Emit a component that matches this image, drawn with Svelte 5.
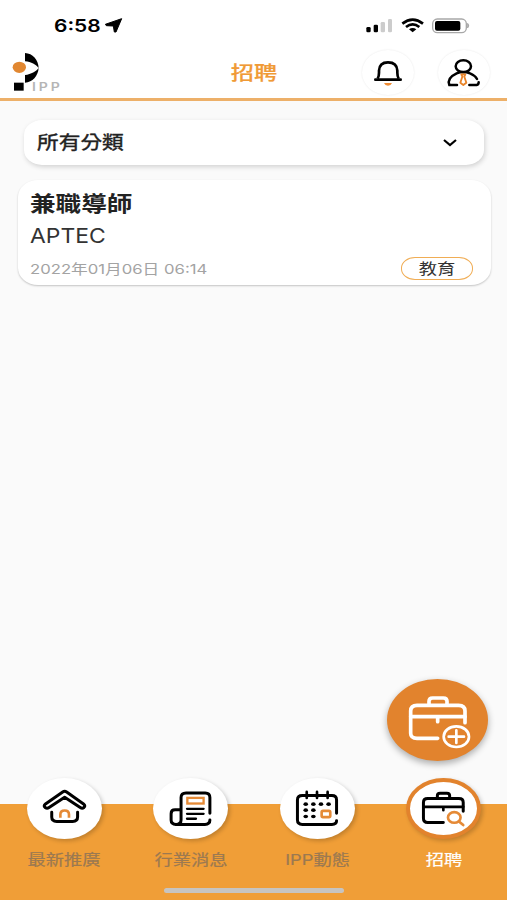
<script>
  const tabs = [
    { id: 'home', label: '最新推廣' },
    { id: 'news', label: '行業消息' },
    { id: 'events', label: 'IPP動態' },
    { id: 'jobs', label: '招聘' }
  ];
  let active = $state('jobs');
</script>

<div class="app">
  <div class="status">
    <div class="clock">
      <span class="time">6:58</span>
      <svg width="18" height="15" viewBox="315 56 54 45"><path d="M365 58 L316 75 L319 79 L340 80 L343 98 L348 98 Z" stroke="#000" stroke-width="3" stroke-linejoin="round" /></svg>
    </div>
    <svg class="signals" width="105" height="18" viewBox="330 50 315 54">
      <rect x="334" y="80" width="13" height="16" rx="4" />
      <rect x="356" y="73" width="13" height="23" rx="4" />
      <rect x="377" y="65" width="13" height="31" rx="4" fill="#ccc" />
      <rect x="399" y="56" width="12" height="40" rx="4" fill="#ccc" />
      <g fill="none" stroke="#000" stroke-width="8">
        <path d="M442 70 Q473 46 504 70" />
        <path d="M453 80 Q473 64 493 80" />
      </g>
      <path d="M462 87 Q473 79 484 87 L473 96 Z" />
      <rect x="533" y="56" width="101" height="41" rx="14" fill="#fff" stroke="#a8a8a8" stroke-width="4" />
      <rect x="540" y="62" width="76" height="29" rx="6" />
      <path d="M638 69 Q644 76 638 83 Z" fill="#999" stroke="#999" stroke-width="2" />
    </svg>
  </div>

  <header>
    <div class="logo">
      <svg width="28" height="40" viewBox="36 157 84 120">
        <path d="M75 160 C98 161 115 181 116 205 C108 195 94 187 75 185 Z" />
        <path d="M116 205 C114 229 98 248 75 249 V226 C94 224 108 215 116 205 Z" />
        <ellipse cx="58" cy="203" rx="20" ry="17" fill="#e18731" />
        <rect x="42" y="249" width="29" height="24" />
      </svg>
      <span class="brand">IPP</span>
    </div>
    <h1><span>招聘</span></h1>
    <div class="actions">
      <button class="round" aria-label="notifications">
        <svg width="52" height="46" viewBox="324 149 156 138">
          <path d="M371 235 Q375 228 375 217 V211 Q376 186 402 186 Q429 186 430 211 V217 Q430 228 434 235" fill="none" stroke="#000" stroke-width="8" />
          <path d="M364 238 H440" stroke="#000" stroke-width="8" stroke-linecap="round" />
          <path d="M390 248 H414 Q411 256 402 256 Q393 256 390 248 Z" fill="#ef8c35" />
        </svg>
      </button>
      <button class="round" aria-label="profile">
        <svg width="52" height="46" viewBox="552 149 156 138">
          <g fill="none" stroke="#000" stroke-width="7.5" stroke-linecap="round">
            <ellipse cx="628" cy="198" rx="23" ry="18" />
            <path d="M609 254 H586 Q578 233 608 219 Q627 211 648 219 Q663 225 669 236" />
            <path d="M646 254 H668 Q674 253 674 246" />
          </g>
          <path d="M622 222 H634 L631 229 L637 247 L628 254 L619 247 L625 229 Z" fill="#fff" stroke="#e88429" stroke-width="5.5" stroke-linejoin="round" />
        </svg>
      </button>
    </div>
  </header>

  <main>
    <button class="select">
      <span class="value">所有分類</span>
      <svg width="16" height="10" viewBox="0 0 16 10"><path d="M2 2 L8 7 L14 2" fill="none" stroke="#000" stroke-width="2.2" /></svg>
    </button>
    <article>
      <h2><span>兼職導師</span></h2>
      <p class="company"><span>APTEC</span></p>
      <div class="meta">
        <span class="date">2022年01月06日 06:14</span>
        <span class="tag"><span>教育</span></span>
      </div>
    </article>
    <button class="fab" aria-label="add job">
      <svg width="101" height="82" viewBox="51 41 303 246">
        <g fill="none" stroke="#fff" stroke-width="11" stroke-linecap="round" stroke-linejoin="round">
          <path d="M203 219 H141 Q122 219 122 204 V137 Q122 120 141 120 H266 Q285 120 285 137 V172" />
          <path d="M122 154 H285 M203 154 V169" />
          <path d="M177 118 V108 Q177 98 188 98 H220 Q231 98 231 108 V118" />
        </g>
        <ellipse cx="259" cy="214" rx="46" ry="39" fill="#e2832d" />
        <ellipse cx="259" cy="214" rx="38" ry="31" fill="none" stroke="#fff" stroke-width="8" />
        <path d="M236 214 H282 M259 195 V233" stroke="#fff" stroke-width="8" stroke-linecap="round" />
      </svg>
    </button>
  </main>

  <footer>
    <nav>
      {#each tabs as tab (tab.id)}
        <button class="tab" class:active={active === tab.id} onclick={() => (active = tab.id)}>
          <span class="disc">
            {#if tab.id === 'home'}
              <svg viewBox="80 36 225 184">
                <g fill="none" stroke="#000" stroke-width="9" stroke-linecap="round" stroke-linejoin="round">
                  <path d="M134 115 L187 78 Q193 74 199 78 L251 115 Q256 120 251 125 Q246 129 240 125 L193 94 L146 125 Q140 129 134 125 Q129 120 134 115 Z" />
                  <path d="M154 139 V154 Q154 167 169 167 H217 Q232 167 232 154 V139" />
                </g>
                <path d="M180 156 V146 Q180 134 193 134 Q206 134 206 146 V156" fill="none" stroke="#e58a36" stroke-width="8" />
              </svg>
            {:else if tab.id === 'news'}
              <svg viewBox="460 36 225 184">
                <g fill="none" stroke="#000" stroke-width="9" stroke-linecap="round" stroke-linejoin="round">
                  <path d="M631 142 V95 Q631 81 617 81 H559 Q544 81 544 95 V163 Q544 176 529 176 Q514 176 514 163 V144 Q514 132 526 132 H543" />
                  <path d="M529 176 H616 Q631 176 631 163" />
                  <path d="M562 129 H612 M562 144 H612 M562 159 H589" stroke-width="7" />
                </g>
                <rect x="563" y="96" width="49" height="17" fill="none" stroke="#e58a36" stroke-width="7" />
              </svg>
            {:else if tab.id === 'events'}
              <svg viewBox="78 36 225 184">
                <g fill="none" stroke="#000" stroke-width="9" stroke-linecap="round">
                  <path d="M248 142 V102 Q248 89 234 89 H145 Q130 89 130 102 V163 Q130 176 145 176 H234 Q248 176 248 165" />
                  <path d="M158 78 V96 M189 78 V96 M221 78 V96" stroke-width="8" />
                </g>
                {#each [[155, 115], [178, 115], [201, 115], [224, 115], [155, 133], [178, 133], [155, 152], [178, 152]] as [x, y]}
                  <ellipse cx={x} cy={y} rx="7" ry="5.5" />
                {/each}
                <rect x="203" y="135" width="26" height="19" rx="4" fill="none" stroke="#e58a36" stroke-width="8" />
              </svg>
            {:else}
              <svg viewBox="457 36 225 184">
                <g fill="none" stroke="#000" stroke-width="9" stroke-linecap="round" stroke-linejoin="round">
                  <path d="M569 170 H522 Q509 170 509 158 V110 Q509 98 522 98 H616 Q629 98 629 110 V136" />
                  <path d="M509 123 H629 M569 123 V133" stroke-width="8" />
                  <path d="M551 97 V89 Q551 82 559 82 H580 Q588 82 588 89 V97" />
                </g>
                <g fill="none" stroke="#e58a36" stroke-width="8" stroke-linecap="round">
                  <ellipse cx="602" cy="155" rx="19" ry="16" fill="#fff" />
                  <path d="M616 167 L629 178" />
                </g>
              </svg>
            {/if}
          </span>
          <span class="label">{tab.label}</span>
        </button>
      {/each}
    </nav>
    <div class="indicator"></div>
  </footer>
</div>

<style>
  :global(body) { margin: 0; }
  .app {
    width: 507px; height: 900px; overflow: hidden;
    display: flex; flex-direction: column;
    background: #fafafa; color: #222;
    font-family: Inter, "Noto Sans CJK TC", sans-serif;
  }
  button { border: 0; padding: 0; margin: 0; background: none; font: inherit; color: inherit; }
  svg { display: block; }
  h1, h2, p { margin: 0; }
  h1 span, h2 span, p span, .time, .brand, .value, .date, .tag span, .label {
    display: inline-block; white-space: nowrap;
    transform: scaleX(1.22); transform-origin: left center;
  }

  .status {
    box-sizing: border-box; height: 50px; padding: 1px 37px 0 53.5px;
    display: flex; align-items: center; justify-content: space-between;
    background: #fff; color: #000;
  }
  .clock { display: flex; align-items: center; gap: 14.5px; }
  .time { width: 37px; font-size: 17.2px; font-weight: 600; }
  .signals { overflow: visible; }

  header {
    box-sizing: border-box; height: 51px; flex: none;
    padding: 0 17px 0 12px;
    display: grid; grid-template-columns: 1fr auto 1fr;
    background: #fff; border-bottom: 3px solid #edb069;
  }
  .logo { display: flex; align-items: flex-end; height: 42px; }
  .brand {
    margin: 0 0 -2px -8px; font-size: 11.5px; line-height: 13px;
    letter-spacing: 2.4px; color: #b5b5b5; font-weight: 600;
  }
  h1 {
    padding-left: 7px; font-size: 19px; line-height: 47px; height: 47px; font-weight: 500;
    color: #f09a36; -webkit-text-stroke: .2px #f09a36;
  }
  h1 span, .tag span, .label { transform-origin: center; }
  .actions { display: flex; justify-content: flex-end; gap: 24px; }
  .round {
    width: 52px; height: 45px; border-radius: 50%;
    display: flex; align-items: center; justify-content: center;
    box-shadow: 0 0 2px rgba(0, 0, 0, .1);
  }

  main { flex: 1; display: flex; flex-direction: column; padding-top: 19px; }
  .select {
    box-sizing: border-box; height: 45px; margin: 0 23.5px 0 24px; padding: 0 26px 0 13px;
    display: flex; align-items: center; justify-content: space-between;
    background: #fff; border-radius: 18px / 15px;
    box-shadow: 1px 2px 5px rgba(0, 0, 0, .16);
  }
  .value { font-size: 17.8px; line-height: 24px; margin-top: 1px; color: #222; -webkit-text-stroke: .4px #222; }
  article {
    box-sizing: border-box; height: 105px; margin: 15px 16px 0 18px; padding: 9px 18px 0 12px;
    display: flex; flex-direction: column;
    background: #fff; border-radius: 20px / 17px;
    box-shadow: 0 1px 2px rgba(0, 0, 0, .22);
  }
  h2 { font-size: 21px; line-height: 30px; font-weight: 700; }
  .company { font-size: 20px; line-height: 34px; height: 33px; color: #333; }
  .company span { transform: scaleX(1.145); }
  .meta { display: flex; align-items: center; justify-content: space-between; height: 33px; }
  .date { font-size: 13.3px; color: #a3a3a3; transform: scaleX(1.255); }
  .tag {
    box-sizing: border-box; width: 72px; height: 23px;
    display: flex; align-items: center; justify-content: center;
    border: 1.5px solid #f0ad55; border-radius: 14px / 11px;
    font-size: 15px; line-height: 20px; color: #333;
  }
  .fab {
    width: 101px; height: 82px; margin: auto 19px 43px auto; border-radius: 50%;
    background: #e2832d; box-shadow: 0 3px 7px rgba(0, 0, 0, .32);
  }

  footer { height: 96px; flex: none; background: #f09e37; display: flex; flex-direction: column; align-items: center; }
  nav { box-sizing: border-box; width: 100%; height: 84px; padding-left: 1px; display: grid; grid-template-columns: repeat(4, 1fr); }
  .tab { display: flex; flex-direction: column; align-items: center; margin-top: -26px; gap: 10px; color: #9b7951; }
  .tab.active { color: #fff; }
  .disc {
    box-sizing: border-box; width: 75px; height: 61px; border-radius: 50%;
    background: #fff; display: flex; align-items: center; justify-content: center;
    box-shadow: 2px 2px 4px rgba(0, 0, 0, .2);
  }
  .disc svg { width: 75px; height: 61px; flex: none; }
  .active .disc { border: 4px solid #e2832d; }
  .label { font-size: 15px; line-height: 22px; -webkit-text-stroke: .2px currentColor; }
  .indicator { width: 180px; height: 5px; border-radius: 3px; background: #c7c4c0; }
</style>
